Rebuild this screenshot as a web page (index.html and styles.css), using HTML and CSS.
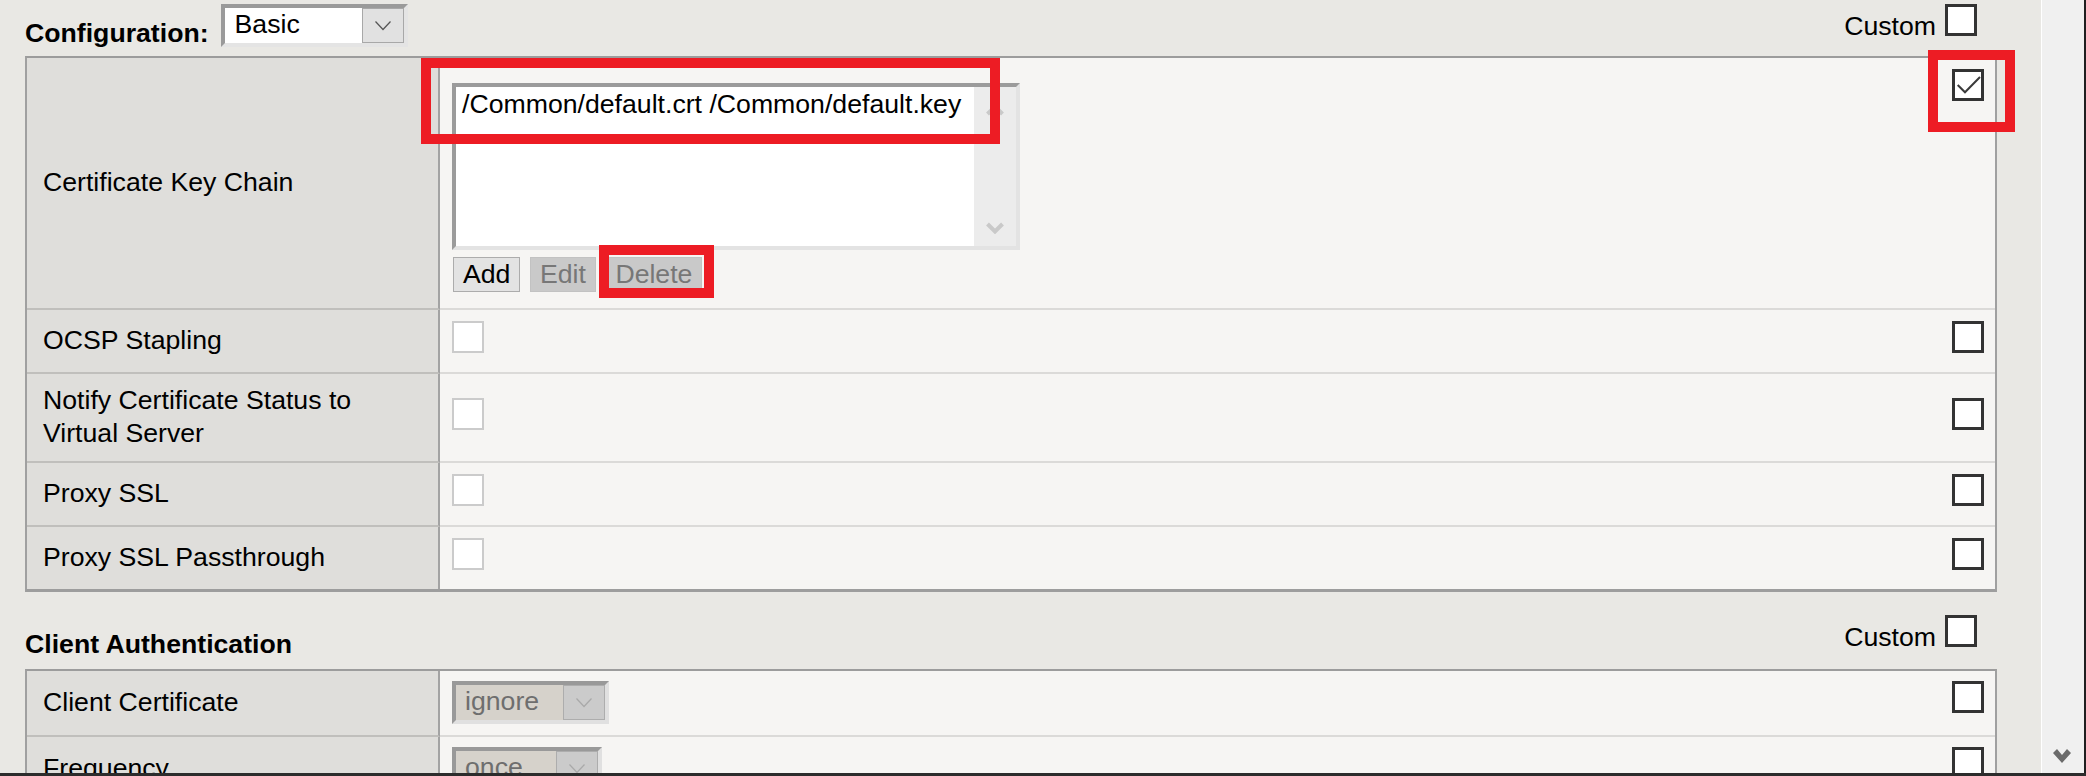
FILE: index.html
```html
<!DOCTYPE html>
<html>
<head>
<meta charset="utf-8">
<link rel="stylesheet" href="styles.css">
</head>
<body>
<div class="window">
  <div class="window-body">
    <div class="page">
      <div class="section-head head-config">
        <span class="section-title">Configuration:</span>
        <div class="select select-basic">
          <span class="select-text">Basic</span>
          <span class="select-btn"><svg width="16" height="10" viewBox="0 0 16 10"><polyline points="0.5,0.5 8,8.5 15.5,0.5" fill="none" stroke="#555" stroke-width="1.2"/></svg></span>
        </div>
        <div class="custom"><span class="custom-label">Custom</span><span class="cb"></span></div>
      </div>

      <div class="table">
        <div class="row">
          <div class="cell label">Certificate Key Chain</div>
          <div class="cell value value-cert">
            <div class="listbox">
              <div class="listbox-text">/Common/default.crt /Common/default.key</div>
              <div class="listbox-scroll">
                <svg width="18" height="12" viewBox="0 0 18 12"><polyline points="1.5,10 9,2.5 16.5,10" fill="none" stroke="#c9c9c9" stroke-width="4"/></svg>
                <svg width="18" height="12" viewBox="0 0 18 12"><polyline points="1.5,2 9,9.5 16.5,2" fill="none" stroke="#c9c9c9" stroke-width="4"/></svg>
              </div>
            </div>
            <div class="btns">
              <span class="btn">Add</span>
              <span class="btn btn-disabled">Edit</span>
              <span class="btn btn-disabled">Delete</span>
            </div>
          </div>
          <div class="cell check check-top">
            <span class="cb"><svg viewBox="0 0 26 26"><polyline points="2.7,13 10,20.3 25,5" fill="none" stroke="#3a3a3a" stroke-width="2"/></svg></span>
          </div>
        </div>
        <div class="row">
          <div class="cell label">OCSP Stapling</div>
          <div class="cell value"><span class="cb cb-light"></span></div>
          <div class="cell check"><span class="cb"></span></div>
        </div>
        <div class="row">
          <div class="cell label">Notify Certificate Status to<br>Virtual Server</div>
          <div class="cell value"><span class="cb cb-light"></span></div>
          <div class="cell check"><span class="cb"></span></div>
        </div>
        <div class="row">
          <div class="cell label">Proxy SSL</div>
          <div class="cell value"><span class="cb cb-light"></span></div>
          <div class="cell check"><span class="cb"></span></div>
        </div>
        <div class="row">
          <div class="cell label">Proxy SSL Passthrough</div>
          <div class="cell value"><span class="cb cb-light"></span></div>
          <div class="cell check"><span class="cb"></span></div>
        </div>
      </div>

      <div class="section-head head-client">
        <span class="section-title">Client Authentication</span>
        <div class="custom"><span class="custom-label">Custom</span><span class="cb"></span></div>
      </div>

      <div class="table">
        <div class="row row-select">
          <div class="cell label">Client Certificate</div>
          <div class="cell value">
            <div class="select select-disabled select-ignore">
              <span class="select-text">ignore</span>
              <span class="select-btn"><svg width="16" height="10" viewBox="0 0 16 10"><polyline points="0.5,0.5 8,8.5 15.5,0.5" fill="none" stroke="#a9a9a9" stroke-width="1.2"/></svg></span>
            </div>
          </div>
          <div class="cell check"><span class="cb"></span></div>
        </div>
        <div class="row row-select">
          <div class="cell label">Frequency</div>
          <div class="cell value">
            <div class="select select-disabled select-once">
              <span class="select-text">once</span>
              <span class="select-btn"><svg width="16" height="10" viewBox="0 0 16 10"><polyline points="0.5,0.5 8,8.5 15.5,0.5" fill="none" stroke="#a9a9a9" stroke-width="1.2"/></svg></span>
            </div>
          </div>
          <div class="cell check"><span class="cb"></span></div>
        </div>
      </div>
    </div>
    <div class="vscroll">
      <svg class="vscroll-down" width="18" height="15" viewBox="0 0 18 15"><path d="M0 5 L4 1 L9 7 L14 1 L18 5 L9 15 Z" fill="#6b6b6b"/></svg>
    </div>
    <div class="frame-right"></div>
  </div>
  <div class="frame-bottom"></div>

  <div class="annot annot-chain"></div>
  <div class="annot annot-custom"></div>
  <div class="annot annot-delete"></div>
</div>
</body>
</html>
```

FILE: styles.css
```css
html, body {
  margin: 0;
  padding: 0;
}
body {
  background: #222;
  font-family: "Liberation Sans", Arial, sans-serif;
  font-size: 26.67px;
  color: #000;
}
.window {
  position: relative;
  width: 2086px;
  height: 776px;
  overflow: hidden;
  display: flex;
  flex-direction: column;
}
.window-body {
  display: flex;
  height: 773px;
  overflow: hidden;
}
.page {
  width: 2041px;
  flex: none;
  box-sizing: border-box;
  padding: 0 44px 0 25px;
  background: #e9e8e4;
}
.vscroll {
  width: 42px;
  flex: none;
  border-left: 1px solid #ffffff;
  background: #f0f0f0;
  display: flex;
  flex-direction: column;
  justify-content: flex-end;
  align-items: flex-start;
}
.vscroll-down {
  margin: 0 0 10px 11px;
}
.frame-right {
  width: 2px;
  flex: none;
  background: #1f1f1f;
}
.frame-bottom {
  height: 3px;
  background: #2c2c2c;
}

/* section headers */
.section-head {
  display: flex;
  align-items: flex-end;
}
.head-config { height: 56px; }
.head-client { height: 77px; }
.section-title {
  font-weight: bold;
  line-height: 30px;
  margin-bottom: 8px;
  white-space: nowrap;
}
.head-client .section-title { margin-bottom: 10px; }
.head-config .select { margin: 0 0 9px 12px; }
.custom {
  margin-left: auto;
  margin-right: 20px;
  display: flex;
  align-items: flex-end;
}
.custom-label {
  line-height: 30px;
  margin: 0 9px 15px 0;
}
.custom .cb { margin-bottom: 20px; }
.head-client .custom-label { margin-bottom: 17px; }
.head-client .custom .cb { margin-bottom: 22px; }

/* tables */
.table {
  border: 2px solid #a0a0a0;
  border-top-color: #9c9c9c;
  border-bottom: 3px solid #9d9d9d;
  background: #f6f5f3;
}
.row {
  display: grid;
  grid-template-columns: 413px 1fr auto;
}
.cell {
  border-bottom: 2px solid #dbdad8;
}
.row:last-child .cell {
  border-bottom: none;
}
.label {
  box-sizing: border-box;
  background: #dfdedb;
  border-right: 2px solid #a3a3a3;
  border-bottom-color: #c0bfbc;
  padding: 10px 12px 11px 16px;
  display: flex;
  align-items: center;
  line-height: 33px;
}
.value {
  padding: 11px 12px;
  display: flex;
  align-items: center;
}
.check {
  padding: 11px 11px 11px 0;
  display: flex;
  align-items: center;
}
.value > .cb,
.check > .cb {
  margin-bottom: 8px;
}
.value-cert {
  flex-direction: column;
  align-items: flex-start;
  padding: 25px 12px 16px;
}
.check-top {
  align-items: flex-start;
}
.check-top > .cb { margin-bottom: 0; }
.row-select .value,
.row-select .check {
  align-items: flex-start;
  padding-top: 10px;
}
.row-select .check > .cb { margin-bottom: 0; }

/* checkboxes */
.cb {
  position: relative;
  display: block;
  width: 32px;
  height: 32px;
  box-sizing: border-box;
  border: 3px solid #333;
  background: #fff;
  flex: none;
}
.cb svg {
  position: absolute;
  left: 0;
  top: 0;
  width: 26px;
  height: 26px;
}
.cb-light {
  border: 2px solid #cbcbcb;
}

/* list box */
.listbox {
  width: 568px;
  height: 167px;
  box-sizing: border-box;
  border: 4px solid;
  border-color: #9b9b9b #e3e3e3 #e3e3e3 #9b9b9b;
  background: #fff;
  display: flex;
}
.listbox-text {
  flex: 1;
  padding: 2px 0 0 6px;
  line-height: 30px;
  white-space: nowrap;
}
.listbox-scroll {
  width: 42px;
  box-sizing: border-box;
  background: #ececec;
  display: flex;
  flex-direction: column;
  justify-content: space-between;
  align-items: center;
  padding: 17px 0 12px;
}

/* buttons */
.btns {
  display: flex;
  gap: 9.5px;
  margin: 7px 0 0 1px;
}
.btn {
  height: 35px;
  box-sizing: border-box;
  border: 1px solid #acacac;
  background: #e3e3e3;
  padding: 0 9px;
  line-height: 33px;
}
.btn-disabled {
  background: #c9c9c9;
  border-color: #c2c2c2;
  color: #777;
}

/* selects */
.select {
  height: 43px;
  box-sizing: border-box;
  border: 4px solid;
  border-color: #9a9a9a #e4e4e4 #e4e4e4 #9a9a9a;
  background: #fff;
  display: flex;
}
.select-basic { width: 187px; }
.select-ignore { width: 157px; }
.select-once { width: 150px; }
.select-text {
  flex: 1;
  padding-left: 10px;
  line-height: 32px;
}
.select-btn {
  width: 42px;
  height: 35px;
  box-sizing: border-box;
  border: 1px solid #a8a8a8;
  background: #e1e1e1;
  display: flex;
  align-items: center;
  justify-content: center;
}
.select-disabled {
  background: #d6d2cb;
  color: #6e6e6e;
  border-color: #999 #e0e0e0 #e0e0e0 #999;
}
.select-disabled .select-text { padding-left: 9px; }
.select-disabled .select-btn {
  background: #cbcbcb;
  border-color: #adadad;
}

/* annotations drawn over the screenshot */
.annot {
  position: absolute;
  box-sizing: border-box;
  border: 10px solid #ed1c24;
}
.annot-chain { left: 421px; top: 58px; width: 579px; height: 86px; }
.annot-custom { left: 1928px; top: 50px; width: 87px; height: 82px; }
.annot-delete { left: 599px; top: 245px; width: 115px; height: 53px; }
```
